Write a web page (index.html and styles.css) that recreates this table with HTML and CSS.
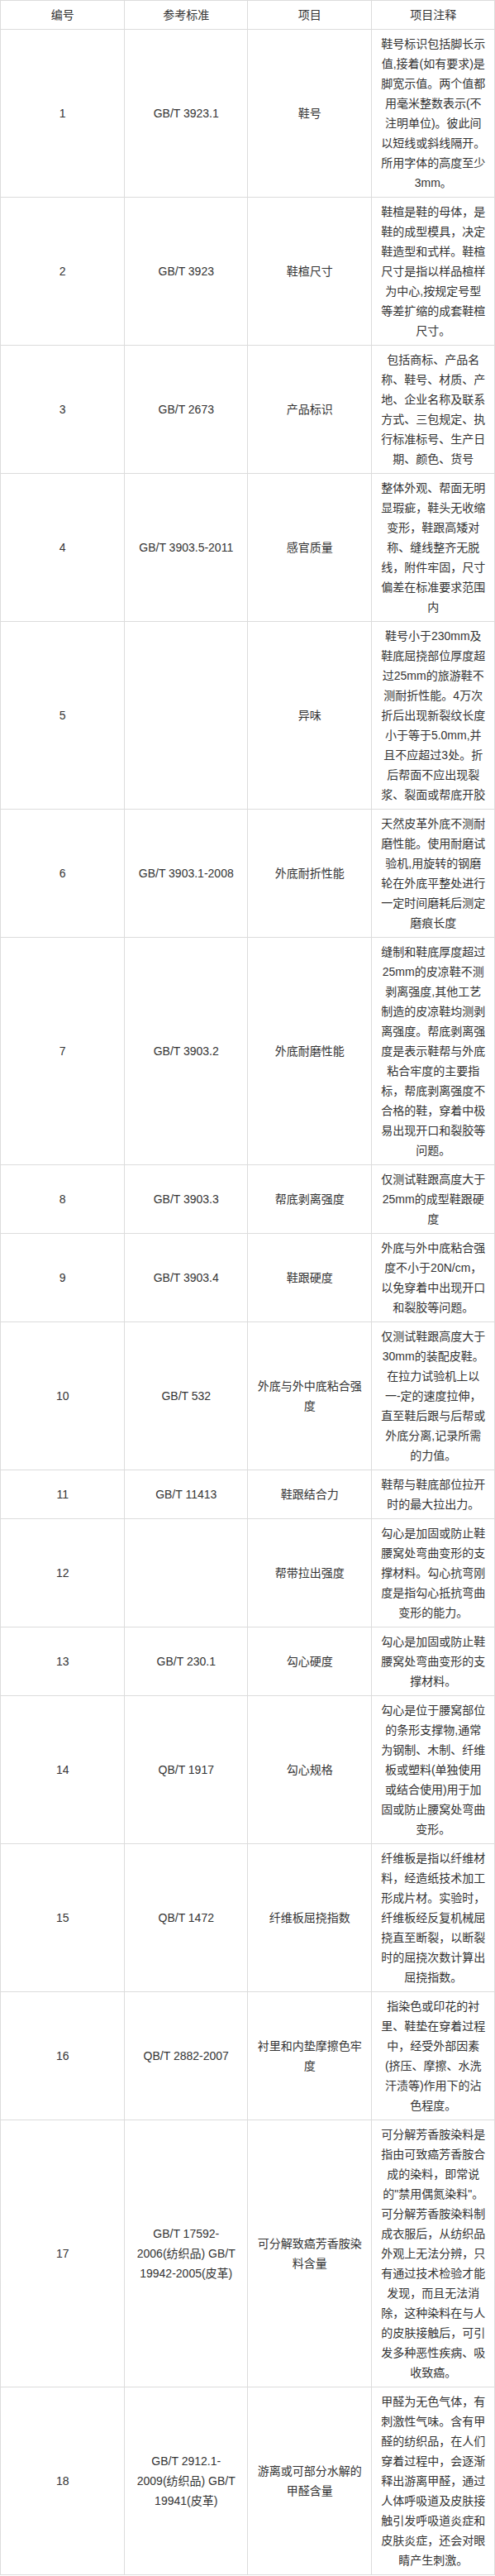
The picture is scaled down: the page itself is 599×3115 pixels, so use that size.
FILE: index.html
```html
<!DOCTYPE html>
<html lang="zh-CN">
<head>
<meta charset="utf-8">
<title>鞋类检测项目</title>
<link rel="stylesheet" href="styles.css">
</head>
<body>
<table class="spec-table">
  <thead>
    <tr><th>编号</th><th>参考标准</th><th>项目</th><th>项目注释</th></tr>
  </thead>
  <tbody>
    <tr><td>1</td><td>GB/T 3923.1</td><td>鞋号</td><td>鞋号标识包括脚长示值,接着(如有要求)是脚宽示值。两个值都用毫米整数表示(不注明单位)。彼此间以短线或斜线隔开。所用字体的高度至少3mm。</td></tr>
    <tr><td>2</td><td>GB/T 3923</td><td>鞋楦尺寸</td><td>鞋楦是鞋的母体，是鞋的成型模具，决定鞋造型和式样。鞋楦尺寸是指以样品楦样为中心,按规定号型等差扩缩的成套鞋楦尺寸。</td></tr>
    <tr><td>3</td><td>GB/T 2673</td><td>产品标识</td><td>包括商标、产品名称、鞋号、材质、产地、企业名称及联系方式、三包规定、执行标准标号、生产日期、颜色、货号</td></tr>
    <tr><td>4</td><td>GB/T 3903.5-2011</td><td>感官质量</td><td>整体外观、帮面无明显瑕疵，鞋头无收缩变形，鞋跟高矮对称、缝线整齐无脱线，附件牢固，尺寸偏差在标准要求范围内</td></tr>
    <tr><td>5</td><td></td><td>异味</td><td>鞋号小于230mm及鞋底屈挠部位厚度超过25mm的旅游鞋不测耐折性能。4万次折后出现新裂纹长度小于等于5.0mm,并且不应超过3处。折后帮面不应出现裂浆、裂面或帮底开胶</td></tr>
    <tr><td>6</td><td>GB/T 3903.1-2008</td><td>外底耐折性能</td><td>天然皮革外底不测耐磨性能。使用耐磨试验机,用旋转的钢磨轮在外底平整处进行一定时间磨耗后测定磨痕长度</td></tr>
    <tr><td>7</td><td>GB/T 3903.2</td><td>外底耐磨性能</td><td>缝制和鞋底厚度超过25mm的皮凉鞋不测剥离强度,其他工艺制造的皮凉鞋均测剥离强度。帮底剥离强度是表示鞋帮与外底粘合牢度的主要指标，帮底剥离强度不合格的鞋，穿着中极易出现开口和裂胶等问题。</td></tr>
    <tr><td>8</td><td>GB/T 3903.3</td><td>帮底剥离强度</td><td>仅测试鞋跟高度大于25mm的成型鞋跟硬度</td></tr>
    <tr><td>9</td><td>GB/T 3903.4</td><td>鞋跟硬度</td><td>外底与外中底粘合强度不小于20N/cm，以免穿着中出现开口和裂胶等问题。</td></tr>
    <tr><td>10</td><td>GB/T 532</td><td>外底与外中底粘合强度</td><td>仅测试鞋跟高度大于30mm的装配皮鞋。在拉力试验机上以一-定的速度拉伸，直至鞋后跟与后帮或外底分离,记录所需的力值。</td></tr>
    <tr><td>11</td><td>GB/T 11413</td><td>鞋跟结合力</td><td>鞋帮与鞋底部位拉开时的最大拉出力。</td></tr>
    <tr><td>12</td><td></td><td>帮带拉出强度</td><td>勾心是加固或防止鞋腰窝处弯曲变形的支撑材料。勾心抗弯刚度是指勾心抵抗弯曲变形的能力。</td></tr>
    <tr><td>13</td><td>GB/T 230.1</td><td>勾心硬度</td><td>勾心是加固或防止鞋腰窝处弯曲变形的支撑材料。</td></tr>
    <tr><td>14</td><td>QB/T 1917</td><td>勾心规格</td><td>勾心是位于腰窝部位的条形支撑物,通常为钢制、木制、纤维板或塑料(单独使用或结合使用)用于加固或防止腰窝处弯曲变形。</td></tr>
    <tr><td>15</td><td>QB/T 1472</td><td>纤维板屈挠指数</td><td>纤维板是指以纤维材料，经造纸技术加工形成片材。实验时，纤维板经反复机械屈挠直至断裂，以断裂时的屈挠次数计算出屈挠指数。</td></tr>
    <tr><td>16</td><td>QB/T 2882-2007</td><td>衬里和内垫摩擦色牢度</td><td>指染色或印花的衬里、鞋垫在穿着过程中，经受外部因素(挤压、摩擦、水洗汗渍等)作用下的沾色程度。</td></tr>
    <tr><td>17</td><td>GB/T 17592-<br>2006(纺织品) GB/T<br>19942-2005(皮革)</td><td>可分解致癌芳香胺染料含量</td><td>可分解芳香胺染料是指由可致癌芳香胺合成的染料，即常说的"禁用偶氮染料"。可分解芳香胺染料制成衣服后，从纺织品外观上无法分辨，只有通过技术检验才能发现，而且无法消除，这种染料在与人的皮肤接触后，可引发多种恶性疾病、吸收致癌。</td></tr>
    <tr><td>18</td><td>GB/T 2912.1-<br>2009(纺织品) GB/T<br>19941(皮革)</td><td>游离或可部分水解的甲醛含量</td><td>甲醛为无色气体，有刺激性气味。含有甲醛的纺织品，在人们穿着过程中，会逐渐释出游离甲醛，通过人体呼吸道及皮肤接触引发呼吸道炎症和皮肤炎症，还会对眼睛产生刺激。</td></tr>
  </tbody>
</table>
</body>
</html>
```

FILE: styles.css
```css
html, body {
  margin: 0;
  padding: 0;
  background: #ffffff;
}

body {
  font-family: "Liberation Sans", "Noto Sans CJK SC", sans-serif;
  font-size: 14px;
  line-height: 24px;
  color: #333333;
}

.spec-table {
  width: 599px;
  table-layout: fixed;
  border-collapse: collapse;
}

.spec-table th,
.spec-table td {
  border: 1px solid #dcdcdc;
  padding: 5px 10px 5px 11px;
  text-align: center;
  vertical-align: middle;
  font-weight: normal;
  word-wrap: break-word;
}
```
